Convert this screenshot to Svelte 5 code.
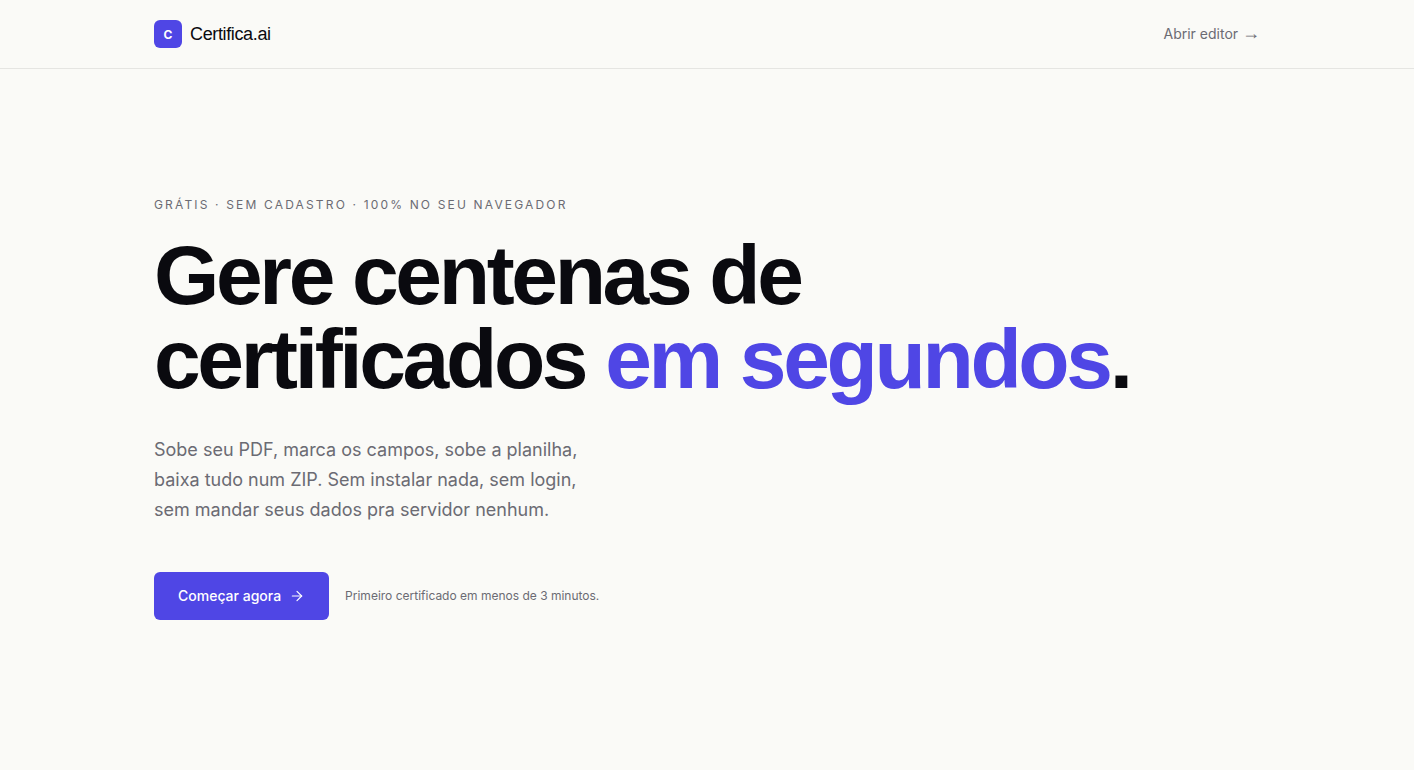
<script>
  const lines = [
    "Sobe seu PDF, marca os campos, sobe a planilha,",
    "baixa tudo num ZIP. Sem instalar nada, sem login,",
    "sem mandar seus dados pra servidor nenhum.",
  ];
</script>

<div class="page">
  <header>
    <div class="container bar">
      <a class="brand" href="/">
        <span class="mark">C</span>
        <span class="name">Certifica.ai</span>
      </a>
      <a class="nav-link" href="/editor">Abrir editor <span class="arrow">→</span></a>
    </div>
  </header>

  <main class="container hero">
    <p class="eyebrow">Grátis · Sem cadastro · 100% no seu navegador</p>
    <h1>Gere centenas de<br />certificados <span>em segundos</span>.</h1>
    <p class="lead">
      {#each lines as line}
        {line}<br />
      {/each}
    </p>
    <div class="actions">
      <button class="cta" type="button">
        Começar agora
        <svg
          width="16"
          height="16"
          viewBox="0 0 24 24"
          fill="none"
          stroke="currentColor"
          stroke-width="1.75"
          stroke-linecap="round"
          stroke-linejoin="round"
          aria-hidden="true"
        >
          <path d="M5 12h14" />
          <path d="m12 5 7 7-7 7" />
        </svg>
      </button>
      <span class="note">Primeiro certificado em menos de 3 minutos.</span>
    </div>
  </main>
</div>

<style>
  :global(body) {
    margin: 0;
    background: #fafaf7;
  }

  .page {
    color: #0a0a0f;
    font-family: Inter, "Liberation Sans", sans-serif;
  }

  header {
    border-bottom: 1px solid #e5e5e2;
  }

  .container {
    box-sizing: border-box;
    max-width: 1154px;
    margin: 0 auto;
    padding: 0 24px;
  }

  .bar {
    display: flex;
    align-items: center;
    justify-content: space-between;
    padding-top: 20px;
    padding-bottom: 20px;
  }

  .brand {
    display: flex;
    align-items: center;
    gap: 8px;
    color: inherit;
    text-decoration: none;
  }

  .mark {
    display: grid;
    place-items: center;
    width: 28px;
    height: 28px;
    border-radius: 6px;
    background: #4f46e5;
    color: #fff;
    font-size: 12px;
    font-weight: 700;
  }

  .name {
    font-family: "Liberation Sans", Arial, sans-serif;
    font-size: 18px;
    line-height: 28px;
    letter-spacing: -0.02em;
  }

  .nav-link {
    color: #6b6b73;
    font-size: 14px;
    line-height: 20px;
    text-decoration: none;
  }

  .arrow {
    font-family: "Liberation Sans", Arial, sans-serif;
    font-size: 18px;
    line-height: 16px;
  }

  .hero {
    padding-top: 128px;
    padding-bottom: 128px;
  }

  p,
  h1 {
    margin: 0;
  }

  .eyebrow {
    color: #6b6b73;
    font-size: 12px;
    line-height: 16px;
    letter-spacing: 0.18em;
    text-transform: uppercase;
  }

  h1 {
    margin-top: 20px;
    font-family: "Liberation Sans", Arial, sans-serif;
    font-size: 84px;
    line-height: 84px;
    font-weight: 700;
    letter-spacing: -0.04em;
  }

  h1 span {
    color: #4f46e5;
  }

  .lead {
    margin-top: 34px;
    color: #6b6b73;
    font-size: 18px;
    line-height: 30px;
  }

  .actions {
    display: flex;
    flex-wrap: wrap;
    align-items: center;
    gap: 16px;
    margin-top: 47px;
  }

  .cta {
    display: inline-flex;
    align-items: center;
    gap: 8px;
    height: 48px;
    padding: 0 24px;
    border: 0;
    border-radius: 6px;
    background: #4f46e5;
    color: #fff;
    font: inherit;
    font-size: 14px;
    line-height: 20px;
    font-weight: 500;
    cursor: pointer;
  }

  .note {
    color: #6b6b73;
    font-size: 12px;
    line-height: 16px;
  }
</style>
